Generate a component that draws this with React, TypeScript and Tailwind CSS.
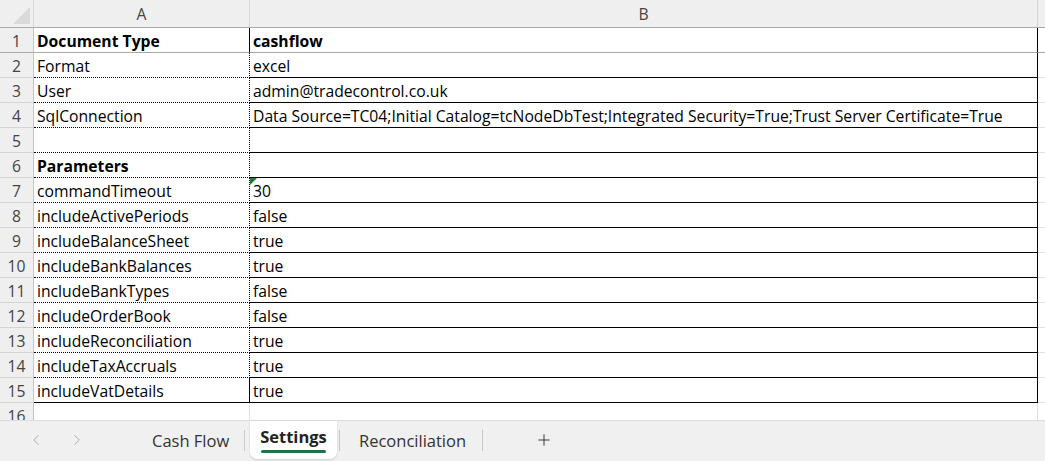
import { ChevronLeft, ChevronRight, Plus } from "lucide-react";

type Row = { key: string; value: string; bold?: boolean; flag?: boolean };

const rows: Row[] = [
  { key: "Document Type", value: "cashflow", bold: true },
  { key: "Format", value: "excel" },
  { key: "User", value: "admin@tradecontrol.co.uk" },
  {
    key: "SqlConnection",
    value:
      "Data Source=TC04;Initial Catalog=tcNodeDbTest;Integrated Security=True;Trust Server Certificate=True",
  },
  { key: "", value: "" },
  { key: "Parameters", value: "", bold: true },
  { key: "commandTimeout", value: "30", flag: true },
  { key: "includeActivePeriods", value: "false" },
  { key: "includeBalanceSheet", value: "true" },
  { key: "includeBankBalances", value: "true" },
  { key: "includeBankTypes", value: "false" },
  { key: "includeOrderBook", value: "false" },
  { key: "includeReconciliation", value: "true" },
  { key: "includeTaxAccruals", value: "true" },
  { key: "includeVatDetails", value: "true" },
];

const font = { fontFamily: '"Open Sans", "Noto Sans", Arial, sans-serif' };

function SheetRow({ row, index }: { row: Row; index: number }) {
  const n = index + 1;
  const isFirst = n === 1;
  const isLast = n === rows.length;

  // frozen pane line under row 1, black border under the last row
  const bottom = isFirst
    ? "border-b border-solid border-[#a9a9a9]"
    : isLast
      ? "border-b border-solid border-black"
      : "border-b border-dotted border-black";

  return (
    <div className="flex h-[25px]">
      <div
        className={`w-[34px] shrink-0 flex items-center justify-center pt-[3px] bg-[#efefef] border-r border-r-[#c6c6c6] text-[#444] ${
          isFirst ? "border-b border-b-[#a9a9a9]" : "border-b border-b-[#d4d4d4]"
        }`}
      >
        {n}
      </div>
      <div
        className={`w-[216px] shrink-0 flex items-center pl-[3px] pt-[3px] border-r border-dotted border-r-black text-black ${bottom} ${
          row.bold ? "font-bold" : ""
        }`}
      >
        {row.key}
      </div>
      <div
        className={`relative w-[788px] shrink-0 flex items-center pl-[3px] pt-[3px] border-r border-solid border-r-black text-black whitespace-nowrap ${bottom} ${
          row.bold ? "font-bold" : ""
        }`}
      >
        {row.flag && (
          <span className="absolute left-0 top-0 w-0 h-0 border-t-[7px] border-t-[#1e7b34] border-r-[7px] border-r-transparent" />
        )}
        {row.value}
      </div>
      <div
        className={`flex-1 ${
          isFirst ? "border-b border-b-[#a9a9a9]" : "border-b border-b-[#e1e1e1]"
        }`}
      />
    </div>
  );
}

export default function App() {
  return (
    <div
      className="w-[1045px] h-[461px] flex flex-col overflow-hidden bg-white text-[15.7px] leading-none"
      style={font}
    >
      {/* column headers */}
      <div className="flex h-[28px] shrink-0 bg-[#efefef] border-b border-[#ababab] text-[#444]">
        <div className="relative w-[34px] shrink-0 border-r border-[#d4d4d4]">
          <span className="absolute right-[3px] bottom-[3px] w-0 h-0 border-b-[17px] border-b-[#dadada] border-l-[17px] border-l-transparent" />
        </div>
        <div className="w-[216px] shrink-0 flex items-center justify-center pt-[2px] border-r border-[#d4d4d4]">
          A
        </div>
        <div className="w-[788px] shrink-0 flex items-center justify-center pt-[2px] border-r border-[#d4d4d4]">
          B
        </div>
        <div className="flex-1" />
      </div>

      {rows.map((row, i) => (
        <SheetRow key={i} row={row} index={i} />
      ))}

      {/* row 16, cut off */}
      <div className="flex flex-1 min-h-0">
        <div className="w-[34px] shrink-0 flex justify-center pt-[6px] bg-[#efefef] border-r border-[#c6c6c6] text-[#444]">
          16
        </div>
        <div className="w-[216px] shrink-0 border-r border-[#e1e1e1]" />
        <div className="w-[788px] shrink-0 border-r border-[#e1e1e1]" />
        <div className="flex-1" />
      </div>

      {/* sheet tabs */}
      <div className="h-[41px] shrink-0 flex items-start bg-[#f0f0f0] border-t border-[#dcdcdc] text-[#333]">
        <div className="flex items-center h-[38px] pl-[27px] gap-[23px] text-[#9a9a9a]">
          <ChevronLeft size={18} strokeWidth={1.1} />
          <ChevronRight size={18} strokeWidth={1.1} />
        </div>
        <div className="flex items-center h-[38px] pt-[2px] ml-[66px] w-[92px] text-[16.5px]">Cash Flow</div>
        <div className="mt-[9px] h-[21px] w-px bg-[#c8c8c8]" />
        <div className="ml-[5px] w-[87px] h-[38px] bg-white rounded-b-[7px] shadow-[0_1px_2px_rgba(0,0,0,0.15)] flex flex-col items-center justify-center">
          <span className="font-bold text-[16.5px] text-[#222] pt-[2px]">Settings</span>
          <span className="mt-[5px] w-[65px] h-[3px] bg-[#1e7145] rounded-sm" />
        </div>
        <div className="ml-[2px] mt-[9px] h-[21px] w-px bg-[#c8c8c8]" />
        <div className="flex items-center h-[38px] pt-[2px] ml-[19px] w-[123px] text-[16.5px]">Reconciliation</div>
        <div className="mt-[9px] h-[21px] w-px bg-[#c8c8c8]" />
        <div className="flex items-center h-[38px] ml-[52px] text-[#333]">
          <Plus size={18} strokeWidth={1.3} />
        </div>
      </div>
    </div>
  );
}
